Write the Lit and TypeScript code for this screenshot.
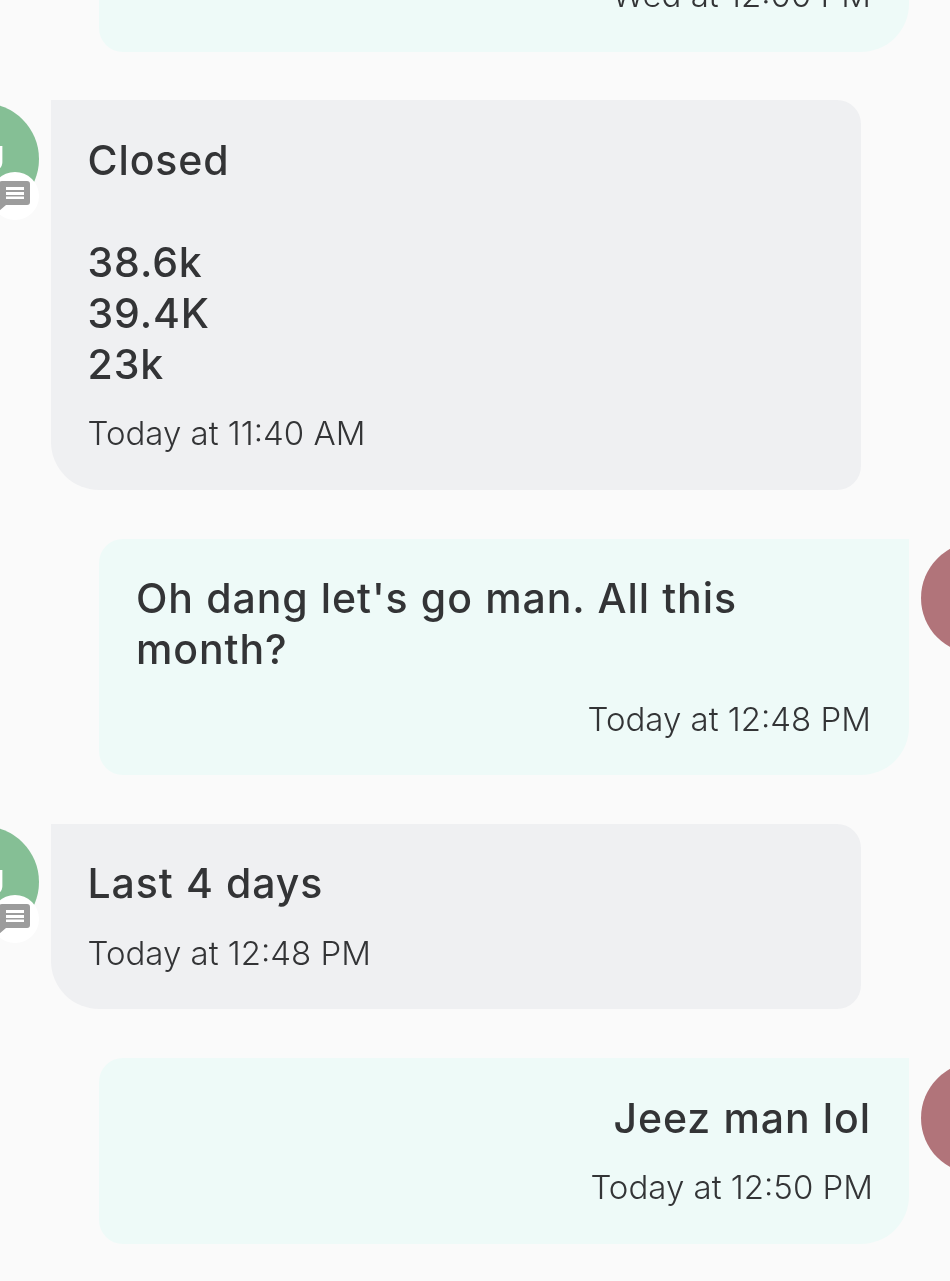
import { LitElement, html, css } from "lit";
import { customElement } from "lit/decorators.js";

type Msg = { side: "in" | "out"; lines: string[]; time: string; align?: boolean };

const MSGS: Msg[] = [
  { side: "in", lines: ["Closed", "", "38.6k", "39.4K", "23k"], time: "Today at 11:40 AM" },
  { side: "out", lines: ["Oh dang let's go man. All this", "month?"], time: "Today at 12:48 PM" },
  { side: "in", lines: ["Last 4 days"], time: "Today at 12:48 PM" },
  { side: "out", lines: ["Jeez man lol"], time: "Today at 12:50 PM", align: true },
];

@customElement("app-root")
export class AppRoot extends LitElement {
  static styles = css`
    :host {
      display: block;
      width: 950px;
      height: 1281px;
      overflow: hidden;
      background: #fafafa;
      font-family: Inter, "Liberation Sans", sans-serif;
      color: #333436;
    }
    .list {
      display: flex;
      flex-direction: column;
      gap: 48.75px;
      margin-top: -100px;
      will-change: transform;
    }
    .row {
      display: flex;
      align-items: flex-start;
      gap: 12px;
    }
    .row.in {
      margin-left: -73px;
    }
    .row.out {
      margin-left: 99px;
    }
    .bubble {
      box-sizing: border-box;
      width: 810px;
      flex: none;
      padding: 34.5px 38px 36.5px 37px;
    }
    .in .bubble {
      background: #eff0f2;
      border-radius: 0 24px 24px 48px;
      padding-left: 36.5px;
    }
    .out .bubble {
      background: #eefaf8;
      border-radius: 24px 0 48px 24px;
    }
    .first {
      height: 151.5px;
      display: flex;
      flex-direction: column;
      justify-content: flex-end;
    }
    .text {
      font-size: 41px;
      line-height: 51px;
      font-weight: 450;
      letter-spacing: 0.9px;
      word-spacing: 0.5px;
      min-height: 51px;
    }
    .text.end {
      text-align: right;
    }
    .time {
      font-size: 33px;
      line-height: 40px;
      font-weight: 300;
      margin-top: 23.5px;
    }
    .out .time {
      text-align: right;
    }
    .time.over {
      margin-right: -2px;
    }
    .first .time {
      margin-top: 0;
    }
    .avatar {
      position: relative;
      flex: none;
      width: 112px;
      height: 112px;
      margin-top: 2.5px;
      border-radius: 50%;
      display: flex;
      align-items: center;
      justify-content: center;
      color: #fff;
      font-size: 34px;
      font-weight: 400;
    }
    .in .avatar {
      background: #85bf95;
    }
    .out .avatar {
      background: #b1747a;
      margin-top: 3.5px;
    }
    .badge {
      position: absolute;
      left: 64px;
      top: 69px;
      width: 48px;
      height: 48px;
      border-radius: 50%;
      background: #fff;
      display: flex;
      align-items: center;
      justify-content: center;
    }
    .badge svg {
      display: block;
    }
  `;

  render() {
    return html`
      <div class="list">
        <div class="row out">
          <div class="bubble first"><div class="time">Wed at 12:00 PM</div></div>
        </div>
        ${MSGS.map(
          (m) => html`
            <div class="row ${m.side}">
              ${m.side === "in"
                ? html`<div class="avatar">
                    JU
                    <div class="badge">
                      <svg width="36" height="36" viewBox="0 0 36 36">
                        <path
                          d="M5 3h25a3 3 0 0 1 3 3v18a3 3 0 0 1-3 3H9l-7 6V6a3 3 0 0 1 3-3z"
                          fill="#9c9c9c"
                        />
                        <path d="M9 9h18v3H9zM9 14h18v3H9zM9 18.5h18v2.5H9z" fill="#fff" />
                      </svg>
                    </div>
                  </div>`
                : ""}
              <div class="bubble">
                ${m.lines.map(
                  (l) => html`<div class="text ${m.align ? "end" : ""}">${l}</div>`
                )}
                <div class="time ${m.align ? "over" : ""}">${m.time}</div>
              </div>
              ${m.side === "out" ? html`<div class="avatar"></div>` : ""}
            </div>
          `
        )}
      </div>
    `;
  }
}
